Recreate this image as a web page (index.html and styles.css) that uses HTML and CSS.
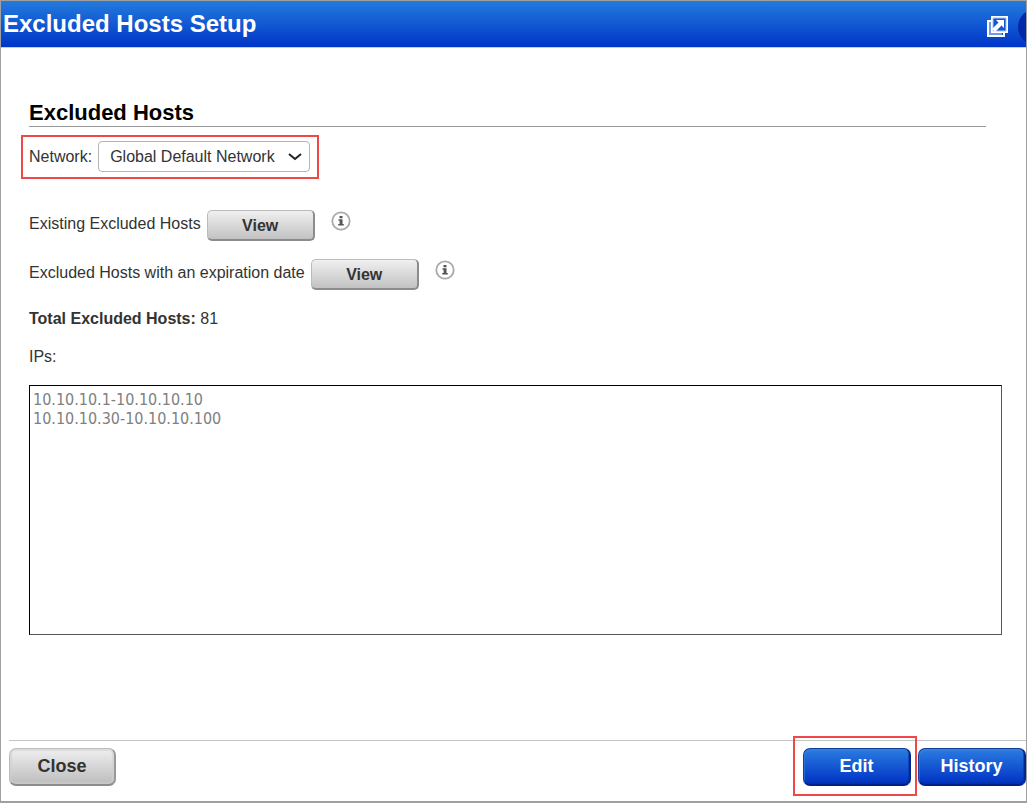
FILE: index.html
```html
<!DOCTYPE html>
<html lang="en">
<head>
  <meta charset="UTF-8">
  <meta name="viewport" content="width=device-width, initial-scale=1.0">
  <title>Excluded Hosts Setup</title>
  <link rel="stylesheet" href="styles.css">
</head>

<body>
  <div class="window">
    <header class="titlebar">
      <h1>Excluded Hosts Setup</h1>
      <button class="popout" aria-label="Open in new window">
        <svg width="21" height="21" viewBox="0 0 21 21">
          <path d="M4 5H1v15h16v-3" fill="none" stroke="#fff" stroke-width="2"/>
          <path d="M3 6v12h12" fill="none" stroke="#6f9be6" stroke-width="2"/>
          <path d="M5 1h15v15H5z" fill="#1556cf" stroke="#fff" stroke-width="2"/>
          <path d="M6 2h13v13H6z" fill="none" stroke="#a9c4f2" stroke-width="1"/>
          <path d="M9 4h8v8l-2.500-2.500-6.500 6.500-3-3 6.500-6.500z" fill="#fff"/>
        </svg>
      </button>
      <button class="help" aria-label="Help"></button>
    </header>

    <main class="content">
      <h2>Excluded Hosts</h2>

      <div class="network highlight">
        <label for="network">Network:</label>
        <div class="select">
          <select id="network">
            <option>Global Default Network</option>
          </select>
          <svg class="arrow" width="14" height="8" viewBox="0 0 14 8"><path d="M1 1l6 5 6-5" fill="none" stroke="#222" stroke-width="2"/></svg>
        </div>
      </div>

      <div class="row">
        <span>Existing Excluded Hosts</span>
        <button class="view">View</button>
        <svg class="info" width="20" height="20" viewBox="0 0 20 20">
          <circle cx="10" cy="10" r="8.700" fill="#fff" stroke="#aaa" stroke-width="1.800"/>
          <path d="M8.500 5h3v2.200h-3zM7.500 8.200h4v4.800h1.300v1.600H7.200V13h1.400V9.700H7.500z" fill="#555"/>
        </svg>
      </div>

      <div class="row">
        <span>Excluded Hosts with an expiration date</span>
        <button class="view">View</button>
        <svg class="info" width="20" height="20" viewBox="0 0 20 20">
          <circle cx="10" cy="10" r="8.700" fill="#fff" stroke="#aaa" stroke-width="1.800"/>
          <path d="M8.500 5h3v2.200h-3zM7.500 8.200h4v4.800h1.300v1.600H7.200V13h1.400V9.700H7.500z" fill="#555"/>
        </svg>
      </div>

      <p class="total"><b>Total Excluded Hosts:</b> 81</p>
      <label class="ips-label" for="ips">IPs:</label>
      <textarea id="ips" readonly>10.10.10.1-10.10.10.10
10.10.10.30-10.10.10.100</textarea>
    </main>

    <footer class="footer">
      <button class="btn">Close</button>
      <div class="actions">
        <div class="edit highlight"><button class="btn blue">Edit</button></div>
        <button class="btn blue">History</button>
      </div>
    </footer>
  </div>
</body>
</html>
```

FILE: styles.css
```css
* {
  box-sizing: border-box;
}

body {
  margin: 0;
  font-family: "Liberation Sans", Arial, Helvetica, sans-serif;
  font-size: 16px;
  line-height: 20px;
  color: #333;
  background: #fff;
}

button {
  font-family: inherit;
  cursor: pointer;
}

.window {
  display: flex;
  flex-direction: column;
  min-height: 100vh;
  border: 1px solid #a0a0a0;
  border-bottom-width: 2px;
}

/* title bar */
.titlebar {
  display: flex;
  align-items: center;
  height: 47px;
  overflow: hidden;
  border-bottom: 1px solid #c0cdf0;
  background: linear-gradient(#237bdd, #0036c8);
}

.titlebar h1 {
  flex: 1;
  margin: 0 0 0 2px;
  font-size: 24px;
  line-height: 46px;
  color: #fff;
}

.popout {
  display: block;
  height: 21px;
  margin-top: 4px;
  padding: 0;
  border: none;
  background: none;
}

.popout svg {
  display: block;
}

.help {
  width: 36px;
  height: 36px;
  margin: 6px -28px 0 10px;
  padding: 0;
  border: none;
  border-radius: 50%;
  background: #0028a8;
}

/* content */
.content {
  flex: 1;
  padding: 52px 24px 0 28px;
}

h2 {
  margin: 0 16px 8px 0;
  border-bottom: 1px solid #999;
  font-size: 22px;
  line-height: 26px;
  color: #000;
}

.highlight {
  border: 2px solid #f04848;
}

.network {
  display: flex;
  align-items: center;
  gap: 6px;
  width: fit-content;
  height: 44px;
  margin: 0 0 31px -8px;
  padding: 0 7px 1px 6px;
}

.select {
  position: relative;
}

.select select {
  appearance: none;
  display: block;
  width: 212px;
  height: 31px;
  padding: 0 11px;
  border: 1px solid #b5b5b5;
  border-radius: 4px;
  background: #fff;
  font-family: inherit;
  font-size: 16px;
  color: #333;
}

.arrow {
  position: absolute;
  right: 8px;
  top: 12px;
  pointer-events: none;
}

.row {
  display: flex;
  align-items: flex-start;
  height: 30px;
  margin-bottom: 19px;
}

.row span {
  line-height: 27px;
}

.view {
  width: 108px;
  height: 31px;
  margin: 0 16px 0 6px;
  padding: 1px 0 0;
  border: 1px solid #bbb;
  border-right: 2px solid #8c8c8c;
  border-bottom: 2px solid #8c8c8c;
  border-radius: 5px;
  background: linear-gradient(#f0f0f0, #c2c2c2);
  font-size: 16px;
  font-weight: bold;
  color: #333;
}

.info {
  margin-top: 1px;
}

.total {
  margin: 20px 0 18px;
}

.ips-label {
  display: block;
  margin-bottom: 18px;
}

textarea {
  display: block;
  width: 100%;
  height: 250px;
  padding: 4px 3px;
  border: 1px solid #000;
  border-right-color: #555;
  border-bottom-color: #555;
  resize: none;
  outline: none;
  font-family: "DejaVu Sans Condensed", Tahoma, sans-serif;
  font-size: 16px;
  line-height: 19px;
  color: #808080;
}

/* footer */
.footer {
  display: flex;
  justify-content: space-between;
  align-items: center;
  height: 61px;
  margin-left: 8px;
  padding-bottom: 8px;
  border-top: 1px solid #c4c4c4;
}

.actions {
  display: flex;
  align-items: center;
}

.edit {
  height: 60px;
  padding: 10px 4px 0 8px;
  margin: -2px 1px 0 0;
}

.btn {
  display: block;
  width: 107px;
  height: 38px;
  padding: 0;
  border: 1px solid #bbb;
  border-right: 2px solid #999;
  border-bottom: 2px solid #8c8c8c;
  border-radius: 7px;
  background: linear-gradient(#efefef, #bdbdbd);
  box-shadow: inset 0 0 0 2px #cfcfcf88;
  font-size: 18px;
  font-weight: bold;
  color: #333;
}

.blue {
  width: 108px;
  border-color: #123f9e #00268c #00208a #123f9e;
  background: linear-gradient(#2a7ce0, #0032c4);
  box-shadow: inset 1px 2px 0 #3f83dc88, inset -1px -2px 0 #0030a888;
  color: #fff;
}
```
